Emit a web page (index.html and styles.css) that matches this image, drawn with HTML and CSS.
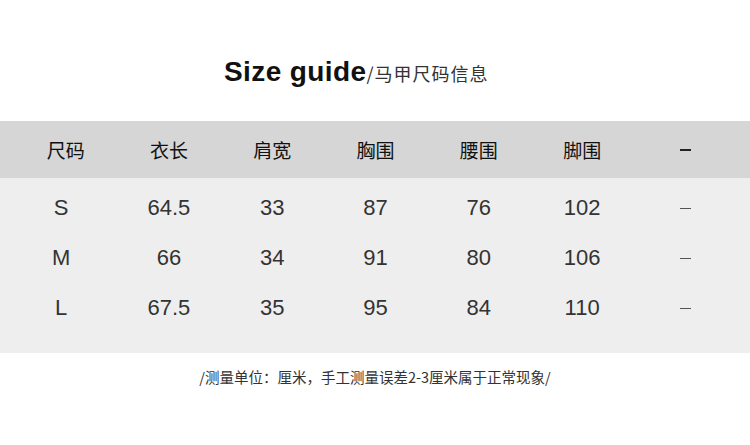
FILE: index.html
```html
<!DOCTYPE html>
<html lang="zh">
<head>
<meta charset="utf-8">
<link rel="stylesheet" href="styles.css">
</head>
<body>
<div class="page">
  <h1 class="title"><span class="en">Size guide</span><span class="cn">/马甲尺码信息</span></h1>
  <div class="table">
    <div class="row head">
      <div class="cell">尺码</div><div class="cell">衣长</div><div class="cell">肩宽</div><div class="cell">胸围</div><div class="cell">腰围</div><div class="cell">脚围</div><div class="cell"><span class="dash thick"></span></div>
    </div>
    <div class="body">
      <div class="row">
        <div class="cell size">S</div><div class="cell">64.5</div><div class="cell">33</div><div class="cell">87</div><div class="cell">76</div><div class="cell">102</div><div class="cell"><span class="dash"></span></div>
      </div>
      <div class="row">
        <div class="cell size">M</div><div class="cell">66</div><div class="cell">34</div><div class="cell">91</div><div class="cell">80</div><div class="cell">106</div><div class="cell"><span class="dash"></span></div>
      </div>
      <div class="row">
        <div class="cell size">L</div><div class="cell">67.5</div><div class="cell">35</div><div class="cell">95</div><div class="cell">84</div><div class="cell">110</div><div class="cell"><span class="dash"></span></div>
      </div>
    </div>
  </div>
  <p class="note">/测量单位：厘米，手工测量误差2-3厘米属于正常现象/</p>
</div>
</body>
</html>
```
FILE: styles.css
```css
* { box-sizing: border-box; }
html, body { margin: 0; padding: 0; background: #fff; }
body { width: 750px; height: 445px; overflow: hidden; font-family: "Liberation Sans", "Noto Sans CJK SC", sans-serif; color: #222; }
.page { display: flex; flex-direction: column; }
.title { margin: 0; height: 121px; padding-top: 52px; padding-left: 224px; text-align: left; font-weight: normal; line-height: 36px; white-space: nowrap; }
.title .en { font-size: 28px; font-weight: bold; color: #111; letter-spacing: 0.4px; }
.title .cn { font-size: 18px; color: #333; font-family: "Noto Sans CJK SC", sans-serif; letter-spacing: 1px; }
.table { display: flex; flex-direction: column; }
.row { display: grid; grid-template-columns: repeat(7, 103.3px); padding-left: 14px; }
.head { background: #d6d6d6; height: 57px; align-items: center; font-family: "Noto Sans CJK SC", sans-serif; font-size: 19px; color: #111; }
.body { background: #eeeeee; padding-top: 5px; padding-bottom: 20px; }
.body .row { height: 50px; align-items: center; font-size: 22px; color: #333; }
.cell { text-align: center; display: flex; justify-content: center; align-items: center; }
.cell.size { padding-right: 9px; }
.dash { display: block; width: 11px; height: 1px; background: #555; }
.dash.thick { height: 2px; background: #222; }
.note { margin: 0; padding-top: 14px; text-align: center; font-size: 14.5px; color: #333; font-family: "Noto Sans CJK SC", sans-serif; line-height: 20px; }
```
